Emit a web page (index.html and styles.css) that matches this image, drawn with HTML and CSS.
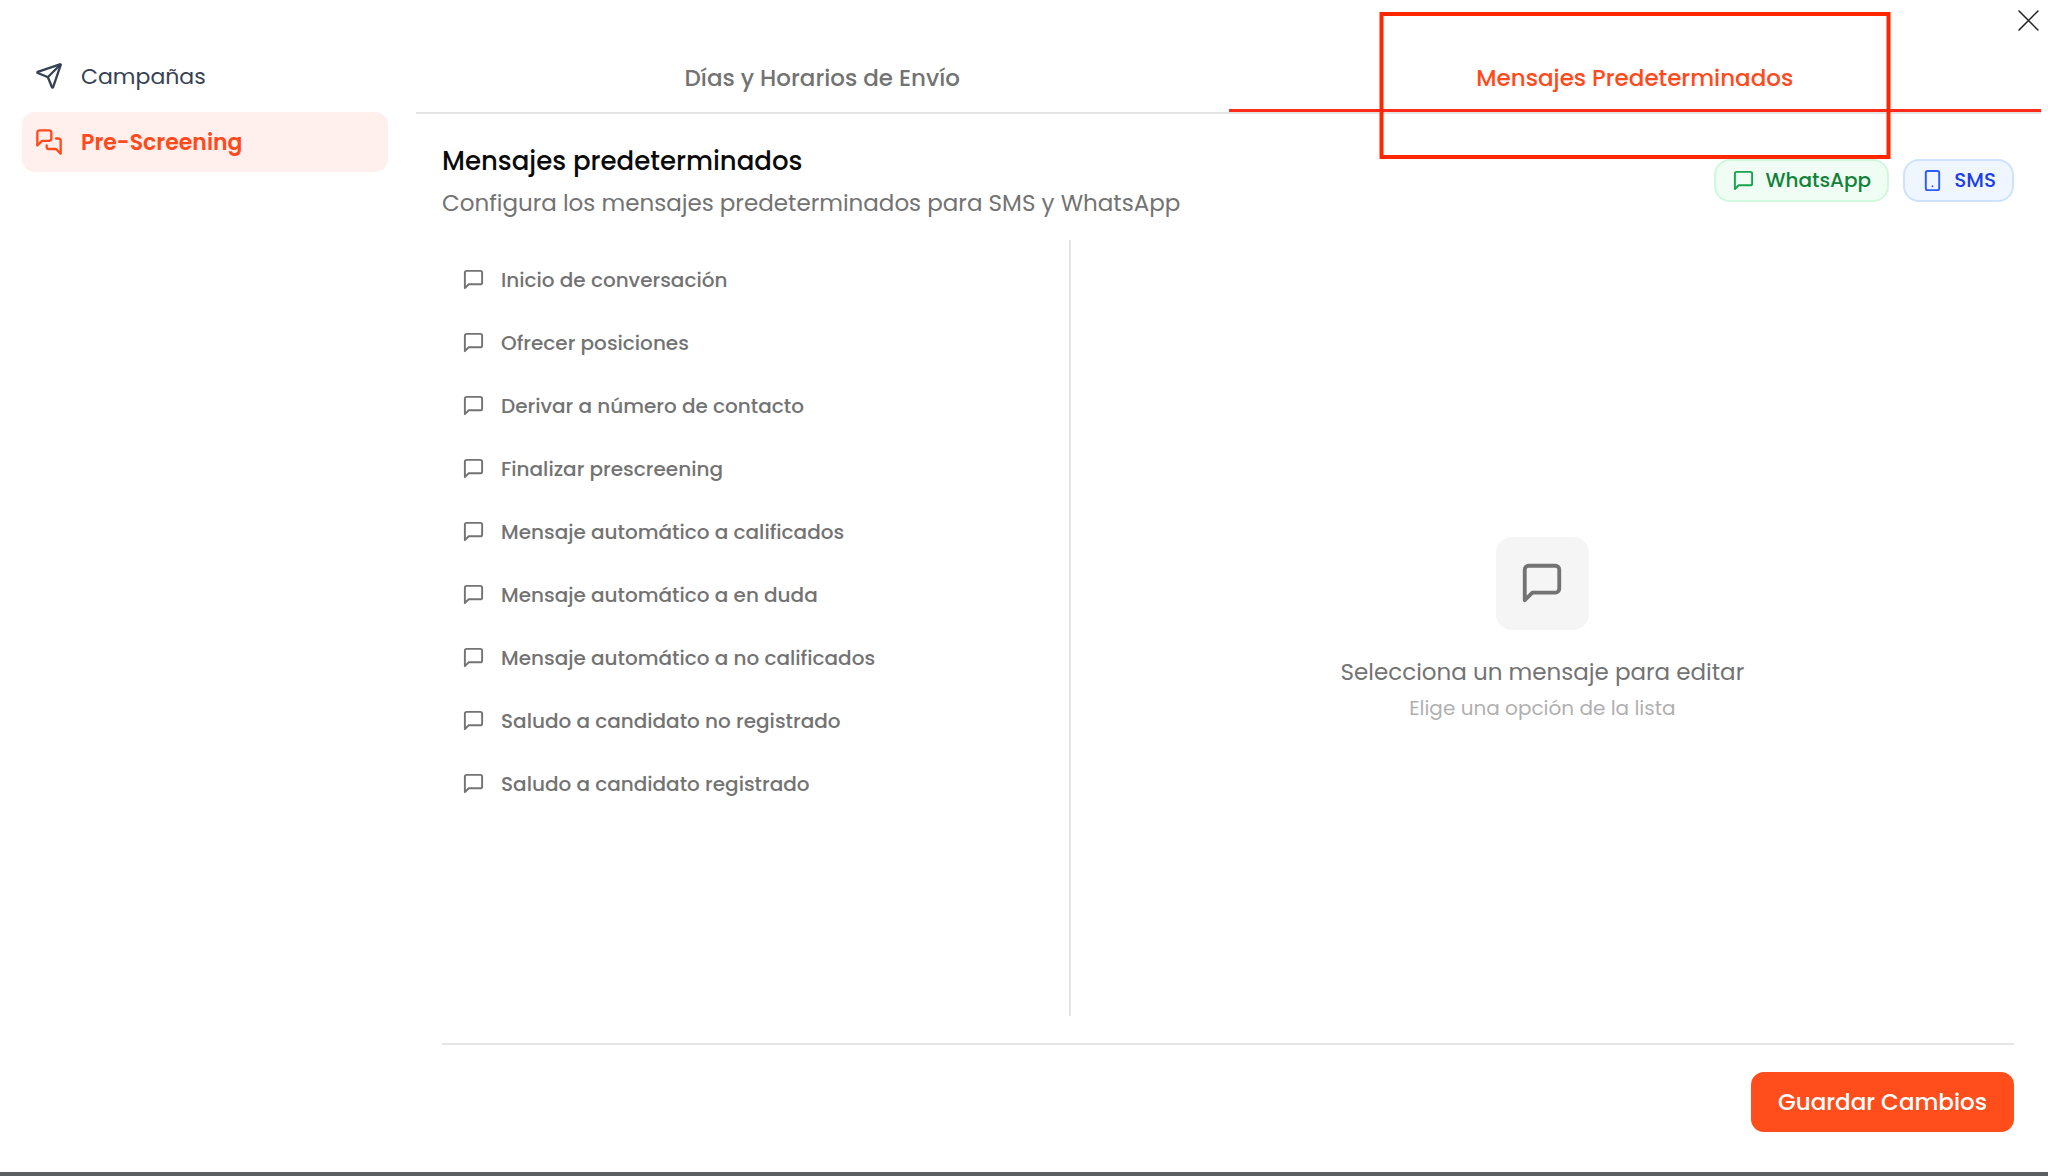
FILE: index.html
```html
<!DOCTYPE html>
<html lang="es">
<head>
<meta charset="utf-8">
<title>Pre-Screening</title>
<link rel="stylesheet" href="styles.css">
</head>
<body>
<svg class="sprite" aria-hidden="true">
  <symbol id="send" viewBox="0 0 24 24">
    <path d="M14.536 21.686a.5.5 0 0 0 .937-.024l6.5-19a.496.496 0 0 0-.635-.635l-19 6.5a.5.5 0 0 0-.024.937l7.93 3.18a2 2 0 0 1 1.112 1.11z"/>
    <path d="m21.854 2.147-10.94 10.939"/>
  </symbol>
  <symbol id="chats" viewBox="0 0 24 24">
    <path d="M14 9a2 2 0 0 1-2 2H6l-4 4V4a2 2 0 0 1 2-2h8a2 2 0 0 1 2 2z"/>
    <path d="M18 9h2a2 2 0 0 1 2 2v11l-4-4h-6a2 2 0 0 1-2-2v-1"/>
  </symbol>
  <symbol id="message" viewBox="0 0 24 24">
    <path d="M21 15a2 2 0 0 1-2 2H7l-4 4V5a2 2 0 0 1 2-2h14a2 2 0 0 1 2 2z"/>
  </symbol>
  <symbol id="phone" viewBox="0 0 24 24">
    <rect x="5" y="2" width="14" height="20" rx="2"/>
    <path d="M12 18h.01"/>
  </symbol>
  <symbol id="close" viewBox="0 0 20 20">
    <path d="M1 1l18 18M19 1 1 19"/>
  </symbol>
</svg>
<div class="dialog">
  <button class="close" type="button" aria-label="Cerrar"><svg class="icon"><use href="#close"/></svg></button>
  <nav class="sidebar">
    <a class="nav-item" href="#campanas"><svg class="icon"><use href="#send"/></svg>Campañas</a>
    <a class="nav-item active" href="#pre-screening" aria-current="page"><svg class="icon"><use href="#chats"/></svg>Pre-Screening</a>
  </nav>
  <main class="main">
    <div class="tabs" role="tablist">
      <button class="tab" type="button" role="tab" aria-selected="false">Días y Horarios de Envío</button>
      <button class="tab active" type="button" role="tab" aria-selected="true">Mensajes Predeterminados<span class="marker"></span></button>
    </div>
    <section class="panel">
      <header class="panel-head">
        <div>
          <h1 class="title">Mensajes predeterminados</h1>
          <p class="subtitle">Configura los mensajes predeterminados para SMS y WhatsApp</p>
        </div>
        <div class="badges">
          <span class="badge whatsapp"><svg class="icon"><use href="#message"/></svg>WhatsApp</span>
          <span class="badge sms"><svg class="icon"><use href="#phone"/></svg>SMS</span>
        </div>
      </header>
      <div class="editor">
        <div class="list">
          <button class="message" type="button"><svg class="icon"><use href="#message"/></svg>Inicio de conversación</button>
          <button class="message" type="button"><svg class="icon"><use href="#message"/></svg>Ofrecer posiciones</button>
          <button class="message" type="button"><svg class="icon"><use href="#message"/></svg>Derivar a número de contacto</button>
          <button class="message" type="button"><svg class="icon"><use href="#message"/></svg>Finalizar prescreening</button>
          <button class="message" type="button"><svg class="icon"><use href="#message"/></svg>Mensaje automático a calificados</button>
          <button class="message" type="button"><svg class="icon"><use href="#message"/></svg>Mensaje automático a en duda</button>
          <button class="message" type="button"><svg class="icon"><use href="#message"/></svg>Mensaje automático a no calificados</button>
          <button class="message" type="button"><svg class="icon"><use href="#message"/></svg>Saludo a candidato no registrado</button>
          <button class="message" type="button"><svg class="icon"><use href="#message"/></svg>Saludo a candidato registrado</button>
        </div>
        <div class="empty">
          <span class="empty-icon"><svg class="icon"><use href="#message"/></svg></span>
          <p class="empty-title">Selecciona un mensaje para editar</p>
          <p class="empty-text">Elige una opción de la lista</p>
        </div>
      </div>
      <footer class="footer">
        <button class="save" type="button">Guardar Cambios</button>
      </footer>
    </section>
  </main>
</div>
</body>
</html>
```
FILE: styles.css
```css
* { box-sizing: border-box; }

body {
  margin: 0;
  background: #5c5e5f;
  font-family: Poppins, Inter, "Liberation Sans", sans-serif;
  color: #0a0a0a;
}

h1, p { margin: 0; }

button {
  border: 0;
  background: none;
  font-family: inherit;
  cursor: pointer;
}

.sprite { position: absolute; width: 0; height: 0; }

.icon {
  flex: none;
  width: 23px;
  height: 23px;
  fill: none;
  stroke: currentColor;
  stroke-width: 2;
  stroke-linecap: round;
  stroke-linejoin: round;
}

.dialog {
  position: relative;
  display: flex;
  gap: 28px;
  min-height: calc(100vh - 4px);
  margin-bottom: 4px;
  padding-right: 7px;
  background: #fff;
}

.close {
  position: absolute;
  top: 10px;
  right: 9px;
  display: flex;
  padding: 0;
  color: #222;
}
.close .icon {
  width: 21px;
  height: 21px;
  stroke-width: 1.5;
}

.sidebar {
  display: flex;
  flex: none;
  flex-direction: column;
  gap: 6px;
  width: 388px;
  padding: 46px 0 0 22px;
}

.nav-item {
  display: flex;
  align-items: center;
  gap: 18px;
  height: 60px;
  padding: 0 13px;
  border-radius: 13px;
  font-size: 22px;
  color: #364153;
  text-decoration: none;
}
.nav-item .icon { width: 28px; height: 28px; }
.nav-item.active {
  background: #fff0ed;
  color: #ff4a1c;
  font-weight: 600;
}

.main {
  display: flex;
  flex: 1;
  flex-direction: column;
  min-width: 0;
  padding-top: 44px;
}

.tabs {
  display: flex;
  border-bottom: 2px solid #e5e5e5;
}

.tab {
  position: relative;
  flex: 1;
  height: 68px;
  padding: 3px 0 0;
  border-bottom: 3px solid transparent;
  font-size: 23px;
  font-weight: 500;
  color: #737373;
}
.tab.active {
  border-color: #ff2a1a;
  color: #ff4a1c;
}

.marker {
  position: absolute;
  top: -32px;
  left: 50%;
  width: 511px;
  height: 147px;
  border: 4px solid #ff2600;
  transform: translateX(-50%);
  pointer-events: none;
}

.panel {
  display: flex;
  flex: 1;
  flex-direction: column;
  padding: 26px 27px 40px 26px;
}

.panel-head {
  display: flex;
  align-items: center;
  justify-content: space-between;
  margin-bottom: 16px;
}

.title {
  font-size: 26px;
  font-weight: 500;
  line-height: 42px;
}

.subtitle {
  font-size: 23px;
  line-height: 42px;
  color: #737373;
}

.badges {
  display: flex;
  gap: 14px;
  padding-bottom: 4px;
}

.badge {
  display: flex;
  align-items: center;
  gap: 10px;
  height: 43px;
  padding: 0 16px;
  border: 2px solid;
  border-radius: 16px;
  font-size: 20px;
  font-weight: 500;
}
.badge.whatsapp {
  border-color: #d0f8de;
  background: #f0fdf4;
  color: #118238;
}
.badge.whatsapp .icon { color: #16a34a; }
.badge.sms {
  border-color: #cfe2fd;
  background: #eff6ff;
  color: #1d3fe8;
}
.badge.sms .icon { color: #2b5cfb; }

.editor {
  display: flex;
  flex: 1;
  margin-bottom: 27px;
}

.list {
  display: flex;
  flex: none;
  flex-direction: column;
  gap: 4px;
  width: 40%;
  padding: 10px 20px 10px 0;
  border-right: 2px solid #e5e5e5;
}

.message {
  display: flex;
  align-items: center;
  gap: 16px;
  height: 59px;
  padding: 0 20px;
  font-size: 20px;
  font-weight: 500;
  color: #737373;
  text-align: left;
}

.empty {
  display: flex;
  flex: 1;
  flex-direction: column;
  align-items: center;
  justify-content: center;
  padding-top: 4px;
}

.empty-icon {
  display: flex;
  align-items: center;
  justify-content: center;
  width: 93px;
  height: 93px;
  margin-bottom: 22px;
  border-radius: 16px;
  background: #f5f5f5;
  color: #737373;
}
.empty-icon .icon { width: 46px; height: 46px; }

.empty-title {
  font-size: 23px;
  line-height: 40px;
  color: #737373;
}

.empty-text {
  font-size: 20px;
  line-height: 32px;
  color: #b0b0b0;
}

.footer {
  display: flex;
  justify-content: flex-end;
  padding-top: 27px;
  border-top: 2px solid #e5e5e5;
}

.save {
  height: 60px;
  padding: 0 27px;
  border-radius: 13px;
  background: #ff4d1c;
  font-size: 23px;
  font-weight: 500;
  color: #fff;
}
```
